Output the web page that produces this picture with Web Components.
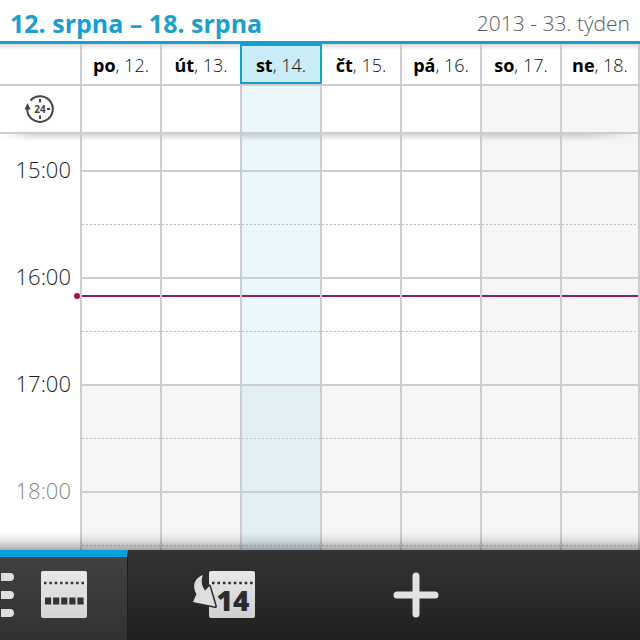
<!DOCTYPE html>
<html lang="cs">
<head>
<meta charset="utf-8">
<meta name="viewport" content="width=device-width, initial-scale=1">
<title>12. srpna – 18. srpna</title>
<style>
  body {
    margin: 0;
    background: #fff;
    color: #111;
    font-family: "Open Sans", "Noto Sans", sans-serif;
  }
</style>
</head>
<body>

<calendar-app>
  <week-title slot="title">
    12. srpna – 18. srpna
    <span slot="week">2013 - 33. týden</span>
  </week-title>
  <week-grid today="2" now="16:10"></week-grid>
  <action-bar slot="actions">
    <action-tab label="Týden" active more>
      <svg width="46" height="48" viewBox="0 0 46 48">
        <defs>
          <linearGradient id="g" x2="0" y2="1"><stop stop-color="#e8e8e8"/><stop offset="1" stop-color="#d4d4d4"/></linearGradient>
        </defs>
        <rect width="46" height="47" rx="2" fill="url(#g)"/>
        <path d="M3 12h40" stroke="#333" stroke-width="2.500" stroke-dasharray="2.500 2.850"/>
        <path d="M4 30h39" stroke="#333" stroke-width="7" stroke-dasharray="6.200 1.900"/>
      </svg>
    </action-tab>
    <action-tab label="Dnes">
      <svg width="62" height="48" viewBox="0 0 62 48" font-family="'Open Sans', sans-serif">
        <defs>
          <linearGradient id="d" x2="0" y2="1"><stop stop-color="#e8e8e8"/><stop offset="1" stop-color="#d0d0d0"/></linearGradient>
        </defs>
        <rect x="16" width="46" height="47" rx="2" fill="url(#d)"/>
        <path d="M19 12h41" stroke="#2c2c2c" stroke-width="2.500" stroke-dasharray="2.500 2.950"/>
        <text x="40" y="40" text-anchor="middle" font-size="28" font-weight="800" fill="#2c2c2c">14</text>
        <path d="M10 4C1 7-1 16 3.500 23L0 31 22.500 35.500 16.500 15 12 19.500C8 14 8 9 10 4z" fill="#dedede" stroke="#2c2c2c" stroke-width="3" stroke-linejoin="round" paint-order="stroke"/>
      </svg>
    </action-tab>
    <action-tab label="Přidat">
      <svg width="46" height="46" viewBox="0 0 46 46">
        <path d="M23 4v38M4 23h38" stroke="#e2e2e2" stroke-width="7" stroke-linecap="round"/>
      </svg>
    </action-tab>
  </action-bar>
</calendar-app>

<script>
class CalendarApp extends HTMLElement {
  constructor() {
    super();
    this.attachShadow({ mode: "open" }).innerHTML = `
      <style>
        :host {
          display: flex;
          flex-direction: column;
          height: 100vh;
          overflow: hidden;
        }
        main {
          position: relative;
          flex: 1;
          min-height: 0;
          overflow: hidden;
        }
        /* shade cast by the title and by the action bar */
        main::before,
        main::after {
          content: "";
          position: absolute;
          left: 0;
          right: 0;
          pointer-events: none;
        }
        main::before {
          top: 0;
          height: 6px;
          background: linear-gradient(rgba(0, 0, 0, 0.14), transparent);
        }
        main::after {
          bottom: 0;
          height: 18px;
          background: linear-gradient(transparent, rgba(0, 0, 0, 0.1) 50%, rgba(0, 0, 0, 0.32));
        }
      </style>
      <slot name="title"></slot>
      <main><slot></slot></main>
      <slot name="actions"></slot>
    `;
  }
}

class WeekTitle extends HTMLElement {
  constructor() {
    super();
    this.attachShadow({ mode: "open" }).innerHTML = `
      <style>
        :host {
          display: block;
          border-bottom: 3px solid #12a0d2;
        }
        header {
          display: flex;
          align-items: center;
          justify-content: space-between;
          padding: 6px 10px 1px;
        }
        h1 {
          margin: 0;
          color: #1a9fcb;
          font-size: 25px;
          font-weight: 700;
          line-height: 34px;
        }
        .week {
          color: #5c5c5c;
          font-size: 21px;
          font-weight: 300;
          line-height: 34px;
        }
      </style>
      <header>
        <h1><slot></slot></h1>
        <div class="week"><slot name="week"></slot></div>
      </header>
    `;
  }
}

const DAYS = [
  ["po", 12], ["út", 13], ["st", 14], ["čt", 15], ["pá", 16], ["so", 17], ["ne", 18],
];
const HOURS = [15, 16, 17, 18];
const WORKDAY_END = 17;

class WeekGrid extends HTMLElement {
  constructor() {
    super();
    this.attachShadow({ mode: "open" });
  }

  connectedCallback() {
    this.shadowRoot.innerHTML = `
      <style>
        :host {
          display: block;
          --line: #cdcdcd;
        }
        table {
          width: 100%;
          table-layout: fixed;
          border-spacing: 0;
        }
        th,
        td {
          box-sizing: border-box;
          position: relative;
          padding: 0;
          font-weight: 400;
        }
        td,
        thead th {
          border-left: 2px solid var(--line);
        }
        td:last-child,
        thead th:last-child {
          border-right: 2px solid var(--line);
        }
        .side,
        thead .side {
          width: 80px;
          border-left: 0;
        }
        .days th,
        .days td {
          height: 40px;
          padding-top: 2px;
          font-size: 18px;
          font-weight: 300;
          text-align: center;
        }
        .days b {
          color: #000;
          font-weight: 700;
        }
        .days .today {
          z-index: 1;
          background: #c9ecf6;
        }
        .days .today::after {
          content: "";
          position: absolute;
          top: 0;
          bottom: 0;
          left: -2px;
          right: -2px;
          border: 2px solid #1a9fcb;
        }
        .allday th,
        .allday td {
          height: 48px;
          border-top: 2px solid var(--line);
          vertical-align: middle;
        }
        .allday svg {
          display: block;
          margin: 0 auto;
        }
        .lead th,
        .lead td {
          height: 38px;
          border-top: 2px solid var(--line);
        }
        .lead th::after,
        .lead td::after {
          content: "";
          position: absolute;
          top: 0;
          left: 0;
          right: 0;
          height: 7px;
          background: linear-gradient(rgba(0, 0, 0, 0.16), transparent);
        }
        .lead th::after {
          background: linear-gradient(to right, #fff, transparent 40%),
            linear-gradient(rgba(0, 0, 0, 0.16), transparent);
        }
        .lead td:last-child::after {
          -webkit-mask: linear-gradient(to right, #000 30%, transparent);
          mask: linear-gradient(to right, #000 30%, transparent);
        }
        .hour td {
          height: 54px;
          border-top: 2px solid var(--line);
        }
        .half td {
          height: 53px;
          background-image: repeating-linear-gradient(to right, #bdbdbd 0 2px, transparent 2px 4px);
          background-repeat: no-repeat;
          background-size: 100% 1px;
        }
        .weekend,
        .off {
          background-color: #f5f5f5;
        }
        tbody .today {
          background-color: #e9f7fc;
        }
        tbody .today.off {
          background-color: #e1eff5;
        }
        .time {
          vertical-align: top;
        }
        .time span {
          display: block;
          margin-top: -16px;
          padding-right: 9px;
          color: #222;
          font-size: 22px;
          font-weight: 300;
          line-height: 30px;
          text-align: right;
        }
        .late span {
          color: #888;
        }
        /* current time */
        .now {
          position: absolute;
          top: 16px;
          left: 0;
          right: 0;
          height: 2px;
          background: #93215f;
        }
        .time .now {
          left: auto;
          right: 0;
          width: 6px;
          height: 6px;
          border-radius: 50%;
          background: #a5104f;
        }
      </style>
      <table>
        <thead>
          <tr class="days">
            <td class="side"></td>
            ${this.cells((day, i) => `<th scope="col" class="${this.dayClass(i, true)}"><b>${day[0]}</b>, ${day[1]}.</th>`)}
          </tr>
        </thead>
        <tbody>
          <tr class="allday">
            <th scope="row" class="side" aria-label="Celý den">
              <svg width="32" height="32" viewBox="0 0 32 32" font-family="'Open Sans', sans-serif">
                <path d="M6.500 7.500A12.800 12.800 0 1 1 3.200 16" fill="none" stroke="#444" stroke-width="2"/>
                <path d="M0.500 16.500l3-6.500L6.700 16.500z" fill="#444"/>
                <path d="M16 6v3.500M16 22.500v3.500M23 16h3" stroke="#444" stroke-width="2"/>
                <text x="16" y="19.500" text-anchor="middle" font-size="10" font-weight="700" fill="#444">24</text>
              </svg>
            </th>
            ${this.cells((day, i) => `<td class="${this.dayClass(i)}"></td>`)}
          </tr>
          <tr class="lead">
            <th></th>
            ${this.cells((day, i) => `<td class="${this.dayClass(i)}"></td>`)}
          </tr>
          ${HOURS.map((hour) => this.hourRows(hour)).join("")}
        </tbody>
      </table>
    `;
  }

  cells(render) {
    return DAYS.map(render).join("");
  }

  dayClass(index, heading) {
    if (index === Number(this.getAttribute("today"))) return "today";
    return index > 4 && !heading ? "weekend" : "";
  }

  hourRows(hour) {
    const off = hour >= WORKDAY_END ? " off" : "";
    const late = hour > WORKDAY_END ? " late" : "";
    const now = parseInt(this.getAttribute("now"), 10) === hour ? `<div class="now"></div>` : "";
    return `
      <tr class="hour">
        <th scope="row" rowspan="2" class="time${late}"><span>${hour}:00</span>${now}</th>
        ${this.cells((day, i) => `<td class="${this.dayClass(i)}${off}">${now}</td>`)}
      </tr>
      <tr class="half">
        ${this.cells((day, i) => `<td class="${this.dayClass(i)}${off}"></td>`)}
      </tr>
    `;
  }
}

class ActionBar extends HTMLElement {
  constructor() {
    super();
    this.attachShadow({ mode: "open" }).innerHTML = `
      <style>
        :host {
          display: block;
        }
        nav {
          display: grid;
          grid-template-columns: 2fr 3fr 3fr 2fr;
          height: 90px;
          background: linear-gradient(#343434, #202020);
        }
      </style>
      <nav><slot></slot></nav>
    `;
  }
}

class ActionTab extends HTMLElement {
  constructor() {
    super();
    this.attachShadow({ mode: "open" }).innerHTML = `
      <style>
        :host {
          display: block;
        }
        button {
          display: flex;
          align-items: center;
          justify-content: center;
          position: relative;
          box-sizing: border-box;
          width: 100%;
          height: 100%;
          margin: 0;
          padding: 0;
          border: 0;
          background: none;
        }
        :host([active]) button {
          border-top: 7px solid #0a9fd8;
          border-right: 1px solid #1c1c1c;
          padding-bottom: 7px;
          background: linear-gradient(#414141, #323232);
        }
        .more {
          display: none;
          position: absolute;
          left: 1px;
          top: 16px;
        }
        :host([more]) .more {
          display: block;
        }
      </style>
      <button type="button">
        <svg class="more" width="13" height="44" viewBox="0 0 13 44">
          <path d="M0 0h9a4 4 0 0 1 0 8H0zM0 18h9a4 4 0 0 1 0 8H0zM0 36h9a4 4 0 0 1 0 8H0z" fill="#dedede"/>
        </svg>
        <slot></slot>
      </button>
    `;
  }

  connectedCallback() {
    this.shadowRoot.querySelector("button").setAttribute("aria-label", this.getAttribute("label"));
  }
}

customElements.define("calendar-app", CalendarApp);
customElements.define("week-title", WeekTitle);
customElements.define("week-grid", WeekGrid);
customElements.define("action-bar", ActionBar);
customElements.define("action-tab", ActionTab);
</script>
</body>
</html>
